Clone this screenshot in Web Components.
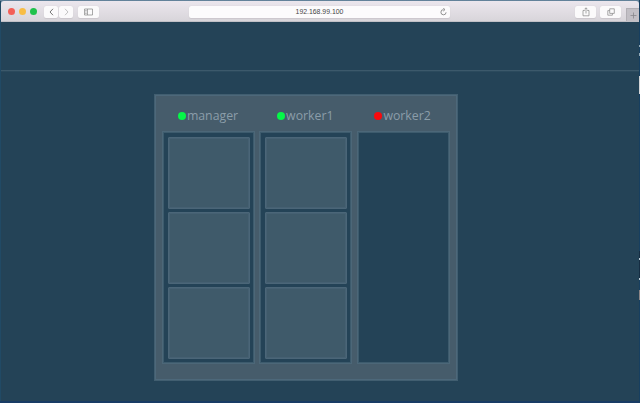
<!DOCTYPE html>
<html lang="en"><head><meta charset="utf-8"><title>Swarm visualizer</title>
<style>html,body{margin:0;height:100%;overflow:hidden}body{font-family:"Open Sans","Noto Sans",sans-serif}</style></head>
<body><desktop-view></desktop-view>
<script>
const define=(name,html)=>customElements.define(name,class extends HTMLElement{
  constructor(){super();this.attachShadow({mode:'open'}).innerHTML=html;}
});

define('tool-button',`<style>
:host{display:flex;align-items:center;justify-content:center;box-sizing:border-box;height:12px;background:#fbfafb;border-radius:2px;box-shadow:0 .5px 1px #cbc7cd;color:#858585}
</style><slot></slot>`);

define('browser-bar',`<style>
:host{display:flex;box-sizing:border-box;height:21px;padding:4px 0 0 7px;background:linear-gradient(#ebe6ed,#d8d5da);border-bottom:1px solid #c1c0c6;border-radius:3px 3px 0 0;position:relative}
.lights{display:flex;gap:4px;padding-top:3px}
i{width:7px;height:7px;border-radius:50%;background:#f35f57}
i:nth-child(2){background:#f8bd45}i:nth-child(3){background:#1fc24b}
.nav{display:flex;gap:1px;margin:1px 0 0 7px}
.nav tool-button{width:14px}
.side{width:21px;margin:1px 0 0 5px}
.address{box-sizing:border-box;width:261px;height:12px;margin:1px 0 0 90px;border-radius:2px;background:#fcfbfc;box-shadow:0 .5px 1px #cbc7cd;display:grid;grid-template-columns:1fr auto 1fr;align-items:center;font:6.9px/12px "Liberation Sans",sans-serif;color:#444}
.address svg{justify-self:end;margin-right:3px;color:#777}
.end{display:flex;gap:4px;margin:1px 0 0 125px}
.end tool-button{width:21px}
.plus{position:absolute;right:0;top:7px;width:13px;height:13px;background:#c2bfc5;border-left:1px solid #b2afb5;border-top:1px solid #b2afb5;box-sizing:border-box;display:grid;place-items:center}
svg{display:block;fill:none;stroke:currentColor}
.plus svg{stroke:#88868b}
</style>
<div class="lights"><i></i><i></i><i></i></div>
<div class="nav"><tool-button style="color:#666"><svg width="5" height="8" stroke-width=".9"><path d="M4 .8 1 4l3 3.2"/></svg></tool-button><tool-button style="color:#bbb"><svg width="5" height="8" stroke-width=".9"><path d="m1 .8 3 3.2-3 3.2"/></svg></tool-button></div>
<tool-button class="side"><svg width="9" height="8" stroke-width=".7"><path d="M.5 1h8v6h-8zM3.5 1v6M1.3 2.5h1.3M1.3 4h1.3M1.3 5.5h1.3"/></svg></tool-button>
<div class="address"><span></span><span>192.168.99.100</span><svg width="7" height="8" stroke-width=".8"><path d="M3.5 1.6A2.6 2.6 0 1 0 6.1 4.3M3.2.1l1.8 1.5-1.8 1.5"/></svg></div>
<div class="end"><tool-button><svg width="8" height="10" stroke-width=".7"><path d="M2.8 3.5H1v5.3h6V3.5H5.2M4 6.5V.9M2.5 2.3 4 .8l1.5 1.5"/></svg></tool-button><tool-button><svg width="8" height="8" stroke-width=".7"><path d="M2.7.8h4.6v4.6H2.7zM2.7 2.6H.8v4.6h4.6V5.4"/></svg></tool-button></div>
<div class="plus"><svg width="7" height="7" stroke-width=".8"><path d="M3.5.5v6M.5 3.5h6"/></svg></div>`);

define('node-name',`<style>
:host{display:flex;align-items:center;justify-content:center;gap:1px;height:16px;font-size:12.3px;line-height:16px;color:#8b9da9}
i{width:8px;height:8px;border-radius:50%;background:var(--status,#05f748)}
</style><i></i><span><slot></slot></span>`);

define('task-card',`<style>
:host{display:block;box-sizing:border-box;height:72px;background:#3f5a6a;border:1px solid #4b6678;border-radius:1px;box-shadow:inset 0 0 0 1px #456072}
</style>`);

define('swarm-node',`<style>
:host{display:flex;flex-direction:column;width:93px}
::slotted(node-name){margin:0 1px 7px 0}
.tasks{box-sizing:border-box;height:233px;padding:5px 4px 0 5px;background:#244357;border:1px solid #4c6778;box-shadow:inset 0 0 0 1px #3d5b6d;display:flex;flex-direction:column;gap:3px}
</style><slot name="name"></slot><div class="tasks"><slot></slot></div>`);

define('swarm-panel',`<style>
:host{display:flex;box-sizing:border-box;gap:4.3px;width:304px;height:287px;padding:13px 0 0 7px;background:#465c6b;border:1px solid #415e70;box-shadow:inset 0 0 0 1px #4d687a}
</style><slot></slot>`);

define('desktop-view',`<style>
:host{display:flex;flex-direction:column;box-sizing:border-box;width:640px;height:403px;padding:1px 1px 2px 0;
background:linear-gradient(90deg,transparent 639px,#173f60 639px),linear-gradient(#63829a,#306287 30%,#244264 80%,#183c65)}
.window{flex:1;display:flex;flex-direction:column;border-left:1px solid #214a65}
main{flex:1;display:flex;flex-direction:column;background:#244357}
header{box-sizing:border-box;height:49px;border-bottom:1px solid #3c596b;box-shadow:0 1px #2b4a5d}
swarm-panel{margin:23px 0 0 153px}
.edge{position:absolute;left:639px;top:0;width:1px;height:403px;background:linear-gradient(#0000 45px,#91a9b8 45px 47px,#0000 47px 53px,#91a9b8 53px 56px,#0000 56px 76px,#d2d4d7 76px 94px,#0000 94px 251px,#152d43 251px 258px,#bdcbd4 258px 260px,#152d43 260px 278px,#bdcbd4 278px 280px,#0000 280px 290px,#8c8586 290px 300px,#0000 300px)}
</style><div class="window"><browser-bar></browser-bar><main><header></header>
<swarm-panel>
<swarm-node><node-name slot="name">manager</node-name><task-card></task-card><task-card></task-card><task-card></task-card></swarm-node>
<swarm-node><node-name slot="name">worker1</node-name><task-card></task-card><task-card></task-card><task-card></task-card></swarm-node>
<swarm-node><node-name slot="name" style="--status:#f90a0d">worker2</node-name></swarm-node>
</swarm-panel></main></div><div class="edge"></div>`);
</script></body></html>
